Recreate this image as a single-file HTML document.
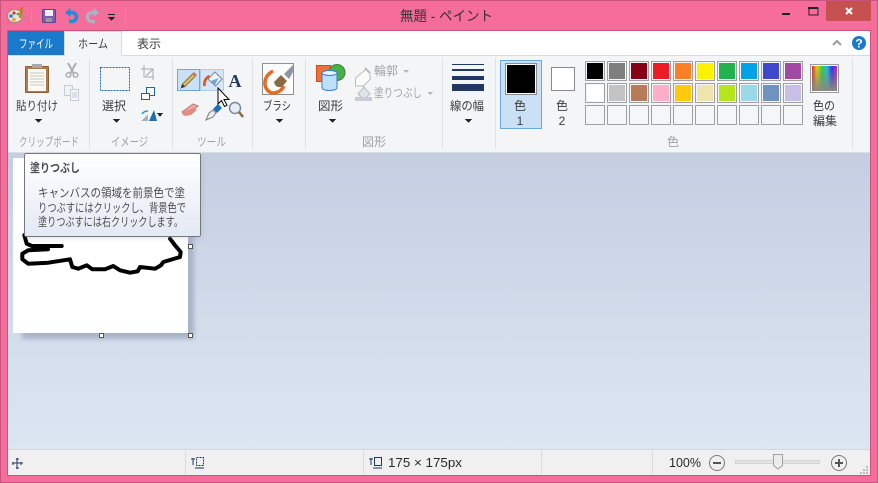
<!DOCTYPE html>
<html><head><meta charset="utf-8">
<style>
html,body{margin:0;padding:0;background:#f66c9b;width:878px;height:483px;overflow:hidden}
svg{display:block}
text{font-family:"Liberation Sans","Noto Sans CJK JP",sans-serif;font-size:12px;fill:#3c3c3c}
.g{fill:#a0a0a0;font-size:12px}
.sw{stroke:#a0a0a0;fill:#f5f6f7}
.t{fill:#4c4c4c}
</style></head><body>
<svg width="878" height="483" viewBox="0 0 878 483" xmlns="http://www.w3.org/2000/svg" shape-rendering="crispEdges">
<defs>
<linearGradient id="bg" x1="0" y1="0" x2="0" y2="1"><stop offset="0" stop-color="#c5cee0"/><stop offset="1" stop-color="#dce6f3"/></linearGradient>
<linearGradient id="tip" x1="0" y1="0" x2="0" y2="1"><stop offset="0" stop-color="#ffffff"/><stop offset="1" stop-color="#e3e9f4"/></linearGradient>
<linearGradient id="rb" x1="0" y1="0" x2="1" y2="0"><stop offset="0" stop-color="#e0203a"/><stop offset=".2" stop-color="#f0d000"/><stop offset=".4" stop-color="#30d040"/><stop offset=".6" stop-color="#20c0e0"/><stop offset=".8" stop-color="#3030e0"/><stop offset="1" stop-color="#d020d0"/></linearGradient>
<linearGradient id="rb2" x1="0" y1="0" x2="0" y2="1"><stop offset="0" stop-color="#808080" stop-opacity="0"/><stop offset="1" stop-color="#8a8a80"/></linearGradient>
<filter id="bl" x="-10%" y="-10%" width="120%" height="120%"><feGaussianBlur stdDeviation="2.5"/></filter>
</defs>
<!-- frame -->
<rect x="0" y="0" width="878" height="483" fill="#f66c9b"/>
<rect x=".5" y=".5" width="877" height="482" fill="none" stroke="#c9557f"/>
<!-- client -->
<rect x="8" y="31" width="862" height="24" fill="#fff"/>
<rect x="7.5" y="30.5" width="863" height="445" fill="none" stroke="#c9557f"/>
<rect x="8" y="55" width="862" height="97" fill="#f4f5f7"/>
<rect x="8" y="55" width="862" height="1" fill="#d8dadd"/>
<rect x="8" y="152" width="862" height="298" fill="url(#bg)"/>
<rect x="8" y="152" width="862" height="1" fill="#d9dde4"/>
<rect x="8" y="450" width="862" height="25" fill="#f0f0f0"/>
<rect x="8" y="449" width="862" height="1" fill="#d6d6d6"/>
<!-- title bar -->
<text x="400" y="21" textLength="93" lengthAdjust="spacingAndGlyphs" style="font-size:14px;fill:#333">無題 - ペイント</text>
<g shape-rendering="auto">
<ellipse cx="15" cy="16" rx="7.500" ry="6.500" fill="#e8e4d8" stroke="#9a8a70"/>
<circle cx="11" cy="16" r="1.800" fill="#2a7fd0"/><circle cx="14" cy="13" r="1.600" fill="#e03030"/><circle cx="18" cy="14" r="1.400" fill="#40b040"/><circle cx="14" cy="19.500" r="1.800" fill="#e8a020"/>
<path d="M22 7 L20 18" stroke="#c87820" stroke-width="2.500"/>
<rect x="31" y="9" width="1" height="13" fill="#d890ac"/>
<rect x="42.500" y="9.500" width="13" height="13" rx="1" fill="#7c5fb0" stroke="#5c4490"/>
<rect x="45" y="10" width="8" height="6" fill="#eef"/><rect x="46" y="18" width="6" height="4" fill="#9a9a9a"/>
<path d="M68 12.500 h4 a4.500 4.500 0 0 1 0 9 h-3" fill="none" stroke="#1c8fdc" stroke-width="3.500"/><path d="M65 12.500 l5.500 -4.500 v9 z" fill="#1c8fdc"/>
<path d="M96 12.500 h-4 a4.500 4.500 0 0 0 0 9 h3" fill="none" stroke="#a9b4c0" stroke-width="3.500"/><path d="M99 12.500 l-5.500 -4.500 v9 z" fill="#a9b4c0"/>
</g>
<rect x="108" y="14" width="7" height="1" fill="#222"/><path d="M108 17h7l-3.500 4z" fill="#222"/>
<rect x="125" y="9" width="1" height="13" fill="#d890ac"/>
<!-- window buttons -->
<rect x="782" y="13" width="8" height="2" fill="#222"/>
<rect x="809" y="8" width="9" height="7" fill="none" stroke="#222"/><rect x="808" y="7" width="10" height="2" fill="#222"/>
<rect x="826" y="1" width="45" height="20" fill="#c75050"/>
<path d="M846 8l6 6M852 8l-6 6" stroke="#fff" stroke-width="2" shape-rendering="auto"/>
<!-- tabs -->
<rect x="8" y="31" width="56" height="24" fill="#1979ca"/>
<text x="19" y="48" textLength="34" lengthAdjust="spacingAndGlyphs" style="fill:#fff">ファイル</text>
<rect x="64.500" y="31.500" width="57" height="24" fill="#f4f5f7" stroke="#dadbdc"/>
<rect x="65" y="55" width="56" height="2" fill="#f4f5f7"/>
<text x="78" y="48" textLength="30" lengthAdjust="spacingAndGlyphs">ホーム</text>
<text x="137" y="48" textLength="24" lengthAdjust="spacingAndGlyphs">表示</text>
<path d="M833 45l4-4 4 4" fill="none" stroke="#9a9a9a" stroke-width="2" shape-rendering="auto"/>
<g shape-rendering="auto"><circle cx="859" cy="43" r="7" fill="#1979ca"/><text x="859" y="47.500" text-anchor="middle" style="fill:#fff;font-size:12px;font-weight:bold">?</text></g>
<!-- separators -->
<g fill="#dfe1e4"><rect x="89" y="58" width="1" height="91"/><rect x="172" y="58" width="1" height="91"/><rect x="252" y="58" width="1" height="91"/><rect x="305" y="58" width="1" height="91"/><rect x="442" y="58" width="1" height="91"/><rect x="495" y="58" width="1" height="91"/><rect x="852" y="58" width="1" height="91"/></g>
<!-- clipboard -->
<rect x="25.500" y="66.500" width="23" height="26" rx="1" fill="#b07a4a" stroke="#8a6038"/>
<rect x="28" y="69" width="18" height="22" fill="#fbfbf6"/>
<path d="M30 73h14M30 76h14M30 79h14M30 82h14M30 85h14" stroke="#c4c4bc"/>
<rect x="32" y="64" width="10" height="4" fill="#a8a8a8"/>
<text x="16" y="110" textLength="42" lengthAdjust="spacingAndGlyphs">貼り付け</text>
<path d="M35 119h7l-3.500 4z" fill="#222"/>
<g shape-rendering="auto"><path d="M68 63l6 11M76 63l-6 11" stroke="#a8aeb6" stroke-width="2"/><circle cx="68.500" cy="75" r="2.300" fill="none" stroke="#a8aeb6" stroke-width="1.500"/><circle cx="75.500" cy="75" r="2.300" fill="none" stroke="#a8aeb6" stroke-width="1.500"/></g>
<rect x="64.500" y="85.500" width="8" height="10" fill="#eef1f6" stroke="#c4ccd6"/><rect x="70.500" y="89.500" width="8" height="11" fill="#f4f6fa" stroke="#c4ccd6"/>
<path d="M72 93h5M72 95h5M72 97h5" stroke="#c4ccd6"/>
<text x="19" y="146" textLength="60" lengthAdjust="spacingAndGlyphs" class="g">クリップボード</text>
<!-- image -->
<rect x="100.500" y="67.500" width="29" height="23" fill="none" stroke="#1f66a8" stroke-dasharray="2 1"/>
<text x="102" y="110" textLength="24" lengthAdjust="spacingAndGlyphs">選択</text>
<path d="M113 119h7l-3.500 4z" fill="#222"/>
<path d="M144 65v12h10M141 69h12v11" fill="none" stroke="#a3aab5"/><path d="M146 76l7-7" stroke="#a3aab5" shape-rendering="auto"/>
<rect x="146.500" y="87.500" width="8" height="8" fill="#fff" stroke="#1f66a8"/><rect x="141.500" y="93.500" width="8" height="6" fill="#fff" stroke="#1f66a8"/>
<path d="M141 121l7-7v7z" fill="#a8b0ba"/><path d="M149 121l5-11 3 11z" fill="#1f6cb0" shape-rendering="auto"/>
<path d="M142 114q2-3 6-3" fill="none" stroke="#2a90d8" stroke-width="1.500" shape-rendering="auto"/>
<path d="M157 113h6l-3 4z" fill="#222"/>
<text x="111" y="146" textLength="37" lengthAdjust="spacingAndGlyphs" class="g">イメージ</text>
<!-- tools -->
<rect x="177.500" y="69.500" width="22" height="21" fill="#c9e0f5" stroke="#6aa9e0"/>
<rect x="200.500" y="69.500" width="23" height="21" fill="#d5e6f6" stroke="#a9cdee"/>
<g shape-rendering="auto">
<path d="M181 88l1.500-4 11-11 2.500 2.500-11 11z" fill="#e0b860" stroke="#70603c" stroke-width=".8"/><path d="M181 88l1.500-4 2.500 2.500z" fill="#333"/><path d="M192 74l2-2 3 3-2 2z" fill="#d87060"/>
<path d="M204.500 86q-1-7 5-10" fill="none" stroke="#e8501a" stroke-width="2.500"/>
<path d="M208 79l7-7 7 7-6.500 7z" fill="#eef5fb" stroke="#7a8a9a"/><path d="M211 81l7.500-3-3.500 7z" fill="#6aa4dc"/>
<text x="235" y="87" text-anchor="middle" style="font-family:'Liberation Serif',serif;font-weight:bold;font-size:18px;fill:#1f3864">A</text>
<path d="M182 112l11-8 5 2-11 9-3 0z" fill="#f0a8a2" stroke="#c07a74"/><path d="M182 112l3 4 6-1 6-5-3-2z" fill="#e48a84"/>
<path d="M206 120l3-7 4-3 3 3-3 4-7 3z" fill="#ececec" stroke="#808080"/><path d="M213 109l5-5 4 4-5 5z" fill="#1f6cb8"/>
<circle cx="235" cy="108" r="5.500" fill="#e4eef8" stroke="#7a8a9a" stroke-width="1.500"/><path d="M239 112l4 5" stroke="#8a6a40" stroke-width="2.500"/>
<path d="M218 88v16l3.500-3.500 3 6 2.500-1.200-3-5.800h5z" fill="#fff" stroke="#000"/>
</g>
<text x="197" y="146" textLength="29" lengthAdjust="spacingAndGlyphs" class="g">ツール</text>
<!-- brush -->
<rect x="262.500" y="63.500" width="31" height="31" fill="#fdfdfd" stroke="#8f8f8f"/>
<g shape-rendering="auto">
<path d="M273 71q-9 5-8 14q2 8 9 8q7-1 10-7" fill="none" stroke="#e86a20" stroke-width="3.500"/>
<path d="M274 82l7-7 6 6-5 6q-7 1-8-5z" fill="#8a6a40"/>
<path d="M284 74l9-9v7l-4 7z" fill="#8c96a6"/>
</g>
<text x="263" y="110" textLength="28" lengthAdjust="spacingAndGlyphs">ブラシ</text>
<path d="M276 119h7l-3.500 4z" fill="#222"/>
<!-- shapes -->
<g shape-rendering="auto">
<rect x="316.500" y="65.500" width="14" height="16" fill="#f0703a" stroke="#c85020"/>
<circle cx="337" cy="72.500" r="8" fill="#48b048" stroke="#388038"/>
<path d="M322 73a7.500 2.500 0 0 1 15 0v15a7.500 2.500 0 0 1-15 0z" fill="#bfe0fa" stroke="#3a80c8"/>
<ellipse cx="329.500" cy="73" rx="7.500" ry="2.500" fill="#e8f4fe" stroke="#3a80c8"/>
</g>
<g shape-rendering="auto">
<path d="M355.500 78v8h8l7-7-1-7 -3-3z" fill="#fafafa" stroke="#b8bcc2"/><path d="M365 68l5 5" stroke="#b8bcc2" stroke-width="2"/>
<path d="M358 94l6-7 6 7-5 4h-3z" fill="#dfe3e8" stroke="#b8bcc2"/><rect x="355" y="97" width="17" height="4" fill="#c8ccd4"/>
</g>
<text x="318" y="110" textLength="25" lengthAdjust="spacingAndGlyphs">図形</text>
<path d="M329 119h7l-3.500 4z" fill="#222"/>
<text x="374" y="75" textLength="24" lengthAdjust="spacingAndGlyphs" style="fill:#a4a4a4">輪郭</text><path d="M403 70h6l-3 3z" fill="#b4b4b4"/>
<text x="374" y="97" textLength="48" lengthAdjust="spacingAndGlyphs" style="fill:#a4a4a4">塗りつぶし</text><path d="M427 92h6l-3 3z" fill="#b4b4b4"/>
<text x="362" y="146" textLength="24" lengthAdjust="spacingAndGlyphs" class="g">図形</text>
<!-- line width -->
<rect x="452" y="64" width="32" height="1" fill="#1f3864"/>
<rect x="452" y="69" width="32" height="2" fill="#1f3864"/>
<rect x="452" y="76" width="32" height="4" fill="#1f3864"/>
<rect x="452" y="84" width="32" height="7" fill="#1f3864"/>
<text x="450" y="110" textLength="34" lengthAdjust="spacingAndGlyphs">線の幅</text>
<path d="M465 119h7l-3.500 4z" fill="#222"/>
<!-- colors -->
<rect x="500.500" y="60.500" width="41" height="68" fill="#c9e0f5" stroke="#6aa9e0"/>
<rect x="505.500" y="63.500" width="31" height="31" fill="#fff" stroke="#8a8a8a"/>
<rect x="507" y="65" width="28" height="28" fill="#000"/>
<text x="520" y="110" text-anchor="middle">色</text><text x="520" y="125" text-anchor="middle">1</text>
<rect x="551.500" y="67.500" width="23" height="23" fill="#fff" stroke="#8a8a8a"/>
<text x="562" y="110" text-anchor="middle">色</text><text x="562" y="125" text-anchor="middle">2</text>
<!-- palette -->
<g>
<rect x="585.500" y="61.500" width="19" height="19" class="sw"/><rect x="587" y="63" width="16" height="16" fill="#000000"/>
<rect x="607.500" y="61.500" width="19" height="19" class="sw"/><rect x="609" y="63" width="16" height="16" fill="#7f7f7f"/>
<rect x="629.500" y="61.500" width="19" height="19" class="sw"/><rect x="631" y="63" width="16" height="16" fill="#880015"/>
<rect x="651.500" y="61.500" width="19" height="19" class="sw"/><rect x="653" y="63" width="16" height="16" fill="#ed1c24"/>
<rect x="673.500" y="61.500" width="19" height="19" class="sw"/><rect x="675" y="63" width="16" height="16" fill="#ff7f27"/>
<rect x="695.500" y="61.500" width="19" height="19" class="sw"/><rect x="697" y="63" width="16" height="16" fill="#fff200"/>
<rect x="717.500" y="61.500" width="19" height="19" class="sw"/><rect x="719" y="63" width="16" height="16" fill="#22b14c"/>
<rect x="739.500" y="61.500" width="19" height="19" class="sw"/><rect x="741" y="63" width="16" height="16" fill="#00a2e8"/>
<rect x="761.500" y="61.500" width="19" height="19" class="sw"/><rect x="763" y="63" width="16" height="16" fill="#3f48cc"/>
<rect x="783.500" y="61.500" width="19" height="19" class="sw"/><rect x="785" y="63" width="16" height="16" fill="#a349a4"/>
<rect x="585.500" y="83.500" width="19" height="19" class="sw"/><rect x="587" y="85" width="16" height="16" fill="#ffffff"/>
<rect x="607.500" y="83.500" width="19" height="19" class="sw"/><rect x="609" y="85" width="16" height="16" fill="#c3c3c3"/>
<rect x="629.500" y="83.500" width="19" height="19" class="sw"/><rect x="631" y="85" width="16" height="16" fill="#b97a57"/>
<rect x="651.500" y="83.500" width="19" height="19" class="sw"/><rect x="653" y="85" width="16" height="16" fill="#ffaec9"/>
<rect x="673.500" y="83.500" width="19" height="19" class="sw"/><rect x="675" y="85" width="16" height="16" fill="#ffc90e"/>
<rect x="695.500" y="83.500" width="19" height="19" class="sw"/><rect x="697" y="85" width="16" height="16" fill="#efe4b0"/>
<rect x="717.500" y="83.500" width="19" height="19" class="sw"/><rect x="719" y="85" width="16" height="16" fill="#b5e61d"/>
<rect x="739.500" y="83.500" width="19" height="19" class="sw"/><rect x="741" y="85" width="16" height="16" fill="#99d9ea"/>
<rect x="761.500" y="83.500" width="19" height="19" class="sw"/><rect x="763" y="85" width="16" height="16" fill="#7092be"/>
<rect x="783.500" y="83.500" width="19" height="19" class="sw"/><rect x="785" y="85" width="16" height="16" fill="#c8bfe7"/>
<rect x="585.500" y="105.500" width="19" height="19" class="sw"/><rect x="607.500" y="105.500" width="19" height="19" class="sw"/><rect x="629.500" y="105.500" width="19" height="19" class="sw"/><rect x="651.500" y="105.500" width="19" height="19" class="sw"/><rect x="673.500" y="105.500" width="19" height="19" class="sw"/><rect x="695.500" y="105.500" width="19" height="19" class="sw"/><rect x="717.500" y="105.500" width="19" height="19" class="sw"/><rect x="739.500" y="105.500" width="19" height="19" class="sw"/><rect x="761.500" y="105.500" width="19" height="19" class="sw"/><rect x="783.500" y="105.500" width="19" height="19" class="sw"/>
</g>
<rect x="810.500" y="64.500" width="28" height="28" fill="#fff" stroke="#9a9a9a"/>
<rect x="812" y="66" width="25" height="25" fill="url(#rb)"/><rect x="812" y="66" width="25" height="25" fill="url(#rb2)"/>
<text x="813" y="110" textLength="22" lengthAdjust="spacingAndGlyphs">色の</text><text x="813" y="125" textLength="24" lengthAdjust="spacingAndGlyphs">編集</text>
<text x="673" y="146" text-anchor="middle" class="g">色</text>
<!-- canvas -->
<rect x="22" y="167" width="172" height="172" fill="#a9b4c8" filter="url(#bl)"/>
<rect x="13" y="158" width="175" height="175" fill="#fff"/>
<path d="M24.300 235L26.700 243.700 32 246H61.700M48 249.300L28.300 250.300 22.300 253.700V259.300L28.300 263.700 48.300 262.700 70 259.300 72.300 267 78.300 268.700 86.700 265.300 92.300 269.300H105L113.300 266 120 270.300 130 272.700 137.700 271.300 140 267 155 268.700 161 265.300 163.300 262 180 257 180.700 252 175 245.300 170 238.700" fill="none" stroke="#000" stroke-width="4" stroke-linejoin="round" stroke-linecap="round" shape-rendering="auto"/>
<g fill="#fff" stroke="#555"><rect x="188.500" y="244.500" width="4" height="4"/><rect x="99.500" y="333.500" width="4" height="4"/><rect x="188.500" y="333.500" width="4" height="4"/></g>
<!-- tooltip -->
<rect x="27" y="155" width="176" height="84" fill="#9aa3b5" opacity=".25" filter="url(#bl)"/>
<rect x="24.500" y="153.500" width="176" height="83" rx="2" fill="url(#tip)" stroke="#767676"/>
<text x="30" y="172" textLength="50" lengthAdjust="spacingAndGlyphs" class="t" style="font-weight:bold">塗りつぶし</text>
<text x="38" y="197" textLength="147" lengthAdjust="spacingAndGlyphs" class="t">キャンバスの領域を前景色で塗</text>
<text x="38" y="212" textLength="148" lengthAdjust="spacingAndGlyphs" class="t">りつぶすにはクリックし、背景色で</text>
<text x="38" y="226" textLength="145" lengthAdjust="spacingAndGlyphs" class="t">塗りつぶすには右クリックします。</text>
<!-- status -->
<g fill="#dadada"><rect x="185" y="451" width="1" height="23"/><rect x="363" y="451" width="1" height="23"/><rect x="541" y="451" width="1" height="23"/><rect x="652" y="451" width="1" height="23"/></g>
<path d="M17 458v11M12 463h11" stroke="#1f3864"/><path d="M16 459h3M16 468h3M13 462v3M21 462v3" stroke="#1f3864"/>
<path d="M193 458v7M191 459h4" stroke="#1f3864"/><rect x="196.500" y="457.500" width="7" height="8" fill="none" stroke="#1f3864" stroke-dasharray="2 1"/><path d="M195 468h9" stroke="#1f3864"/>
<path d="M371 458v7M369 459h4" stroke="#1f3864"/><rect x="374.500" y="457.500" width="7" height="8" fill="none" stroke="#1f3864"/><path d="M373 468h9" stroke="#1f3864"/>
<text x="388" y="467" textLength="74" lengthAdjust="spacingAndGlyphs" style="font-size:12.500px;fill:#2a2a2a">175 × 175px</text>
<text x="669" y="467" style="font-size:12.500px;fill:#2a2a2a">100%</text>
<g shape-rendering="auto"><circle cx="717" cy="463" r="7.500" fill="#f0f0f0" stroke="#7a7a7a"/><circle cx="839" cy="463" r="7.500" fill="#f0f0f0" stroke="#7a7a7a"/></g>
<rect x="713" y="462" width="8" height="2" fill="#555"/><rect x="835" y="462" width="8" height="2" fill="#555"/><rect x="838" y="459" width="2" height="8" fill="#555"/>
<rect x="735.500" y="460.500" width="84" height="3" fill="#e4e4e4" stroke="#d4d4d4"/>
<path d="M773.500 454.500h9v11l-4.500 3.500-4.500-3.500z" fill="#ececec" stroke="#a0a0a0" shape-rendering="auto"/>
<g fill="#bcbcbc"><rect x="866" y="466" width="2" height="2"/><rect x="863" y="469" width="2" height="2"/><rect x="866" y="469" width="2" height="2"/><rect x="860" y="472" width="2" height="2"/><rect x="863" y="472" width="2" height="2"/><rect x="866" y="472" width="2" height="2"/></g>
</svg>
</body></html>
